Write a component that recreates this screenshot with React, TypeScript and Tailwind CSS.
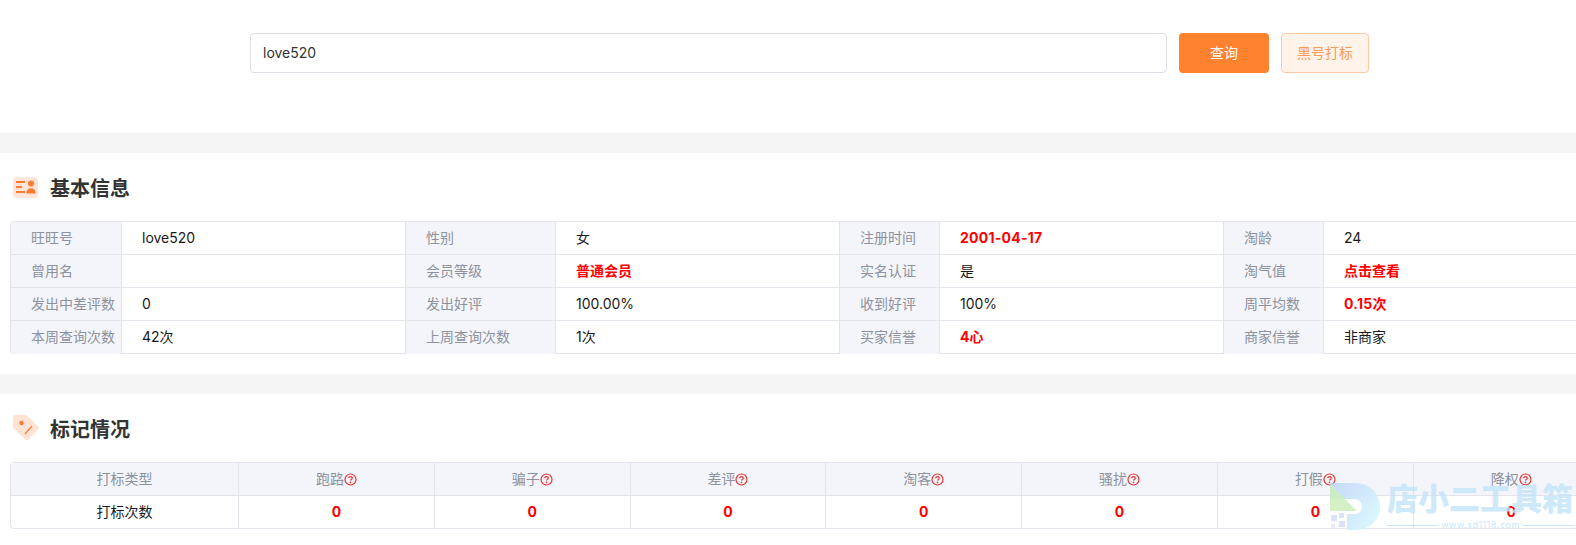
import React from "react";

const rows: [string, string, boolean, string, string, boolean, string, string, boolean, string, string, boolean][] = [
  ["旺旺号", "love520", false, "性别", "女", false, "注册时间", "2001-04-17", true, "淘龄", "24", false],
  ["曾用名", "", false, "会员等级", "普通会员", true, "实名认证", "是", false, "淘气值", "点击查看", true],
  ["发出中差评数", "0", false, "发出好评", "100.00%", false, "收到好评", "100%", false, "周平均数", "0.15次", true],
  ["本周查询次数", "42次", false, "上周查询次数", "1次", false, "买家信誉", "4心", true, "商家信誉", "非商家", false],
];
const marks = ["跑路", "骗子", "差评", "淘客", "骚扰", "打假", "降权"];

function Label({ t, last }: { t: string; last: boolean }) {
  return (
    <div className={`flex items-center pl-5 pb-[2px] bg-[#f4f5fa] text-[14px] text-[#8c929e] border-r border-[#e4e5ec] ${last ? "" : "border-b"}`}>
      {t}
    </div>
  );
}
function Value({ t, red, last }: { t: string; red: boolean; last: boolean }) {
  const wide = red && /\d\D*\d/.test(t);
  return (
    <div className={`flex items-center pl-5 pb-[2px] text-[14px] border-r border-[#e4e5ec] ${last ? "" : "border-b"} ${red ? "font-bold text-[#ff0000]" : "text-[#1a1a1a]"} ${wide ? "tracking-[0.25px]" : ""}`}>
      {t}
    </div>
  );
}
function Help() {
  return (
    <svg width="13" height="13" viewBox="0 0 13 13" className="shrink-0 mt-[2px]" fill="none">
      <circle cx="6.5" cy="6.5" r="5.5" stroke="#ee3030" strokeWidth="1.2" />
      <path d="M4.7 5.2c0-1.1.8-1.6 1.8-1.6s1.8.6 1.8 1.5c0 1.3-1.8 1.3-1.8 2.5" stroke="#ee3030" strokeWidth="1.2" />
      <circle cx="6.5" cy="9.4" r=".8" fill="#ee3030" />
    </svg>
  );
}

export default function App() {
  return (
    <div className="relative w-[1576px] h-[545px] overflow-hidden bg-white font-['Inter','Noto_Sans_CJK_SC',sans-serif]">
      <div className="h-[133px] flex items-start pt-[33px] pl-[250px] gap-3">
        <div className="w-[917px] h-10 flex items-center border border-[#dcdfe6] rounded-[4px] pl-3 pb-[2px] text-[14px] text-[#333]">love520</div>
        <button className="w-[90px] h-10 pb-[2px] rounded-[4px] bg-[#ff832e] text-white text-[14px]">查询</button>
        <button className="w-[88px] h-10 pb-[2px] rounded-[4px] bg-[#fff3ea] border border-[#ffc9a3] text-[#ff9a52] text-[14px]">黑号打标</button>
      </div>
      <div className="h-5 bg-[#f5f5f5]" />
      <div className="h-[68px] flex items-center pl-[13px] gap-3">
        <svg width="25" height="21" viewBox="0 0 25 21">
          <rect width="25" height="21" rx="4" fill="#ffe6d9" />
          <path d="M3 5h9M3 10h6M3 15h9" stroke="#ff7a2e" strokeWidth="1.8" />
          <circle cx="18" cy="6.5" r="3" fill="#ff7a2e" />
          <path d="M13.5 16.5c0-3.6 1.8-5.2 4.5-5.2s4.5 1.6 4.5 5.2z" fill="#ff7a2e" />
        </svg>
        <span className="pt-[4px] text-[20px] leading-7 font-bold text-[#333]">基本信息</span>
      </div>
      <div className="ml-[10px] w-[1640px] h-[133px] grid grid-cols-[111px_284px_150px_284px_100px_284px_100px_326px] grid-rows-[33px_33px_33px_33px] border border-[#e4e5ec] rounded-[4px]">
        {rows.map((r, i) => {
          const last = i === rows.length - 1;
          return (
            <React.Fragment key={i}>
              <Label t={r[0]} last={last} />
              <Value t={r[1]} red={r[2]} last={last} />
              <Label t={r[3]} last={last} />
              <Value t={r[4]} red={r[5]} last={last} />
              <Label t={r[6]} last={last} />
              <Value t={r[7]} red={r[8]} last={last} />
              <Label t={r[9]} last={last} />
              <Value t={r[10]} red={r[11]} last={last} />
            </React.Fragment>
          );
        })}
      </div>
      <div className="h-5 mt-[20px] bg-[#f5f5f5]" />
      <div className="h-[68px] flex items-center pl-[13px] gap-[11px]">
        <svg width="26" height="26" viewBox="0 0 26 26">
          <path d="M2 0h11.5l11.8 11.8q1.2 1.2 0 2.4L15 25q-1.2 1.2-2.4 0L0.6 13.4Q0 12.8 0 12V2q0-2 2-2z" fill="#ffe3d4" />
          <circle cx="8.5" cy="8" r="2.2" fill="#ff7a2e" />
          <path d="M12 19l7-8" stroke="#ff7a2e" strokeWidth="1.2" />
        </svg>
        <span className="pt-[4px] text-[20px] leading-7 font-bold text-[#333]">标记情况</span>
      </div>
      <div className="ml-[10px] w-[1620px] h-[67px] grid grid-cols-[228px_repeat(7,195.8px)] grid-rows-[33px_33px] border border-[#e4e5ec] rounded-[4px]">
        <div className="flex items-center justify-center pb-[2px] bg-[#f4f5fa] text-[14px] text-[#8c929e] border-r border-b border-[#e4e5ec]">打标类型</div>
        {marks.map((m) => (
          <div key={m} className="flex items-center justify-center pb-[2px] bg-[#f4f5fa] text-[14px] text-[#8c929e] border-r border-b border-[#e4e5ec]">
            {m}
            <Help />
          </div>
        ))}
        <div className="flex items-center justify-center pb-[2px] text-[14px] text-[#1a1a1a] border-r border-[#e4e5ec]">打标次数</div>
        {marks.map((m) => (
          <div key={m} className="flex items-center justify-center pb-[2px] text-[14px] font-bold text-[#ff0000] border-r border-[#e4e5ec]">0</div>
        ))}
      </div>
      {/* watermark */}
      <div className="absolute left-[1330px] top-[482px] w-[246px] h-[63px] pointer-events-none">
        <svg width="52" height="50" viewBox="0 0 52 50" className="absolute left-0 top-0">
          <defs>
            <linearGradient id="wmd" x1="0" y1="0" x2="1" y2="0.6">
              <stop offset="0" stopColor="#bcd2f8" stopOpacity="0.8" />
              <stop offset="1" stopColor="#d5f5fd" stopOpacity="0.9" />
            </linearGradient>
          </defs>
          <path d="M0 1h25c14 0 25 10 25 24S39 48 25 48H17V32h8c4 0 7-3 7-7s-3-8-7-8H0z" fill="url(#wmd)" />
          <path d="M0 2l27 27H0z" fill="#cdeebb" fillOpacity="0.85" />
          <g fill="#dbe3fa">
            <rect x="1" y="33" width="6" height="6" />
            <rect x="9" y="31" width="5" height="5" />
            <rect x="9" y="39" width="6" height="6" />
            <rect x="1" y="42" width="4" height="4" opacity=".7" />
          </g>
        </svg>
        <div className="absolute left-[57px] top-[0px] text-[31px] leading-[34px] font-black text-[#c3e4fa] whitespace-nowrap opacity-80">店小二工具箱</div>
        <div className="absolute left-[57px] top-[37px] w-[187px] flex items-center gap-[3px] text-[9px] leading-3 tracking-[0.5px] text-[#c9e7fb]">
          <span className="flex-1 h-px bg-[#c9e7fb]" />www.sd1118.com<span className="flex-1 h-px bg-[#c9e7fb]" />
        </div>
      </div>
    </div>
  );
}
